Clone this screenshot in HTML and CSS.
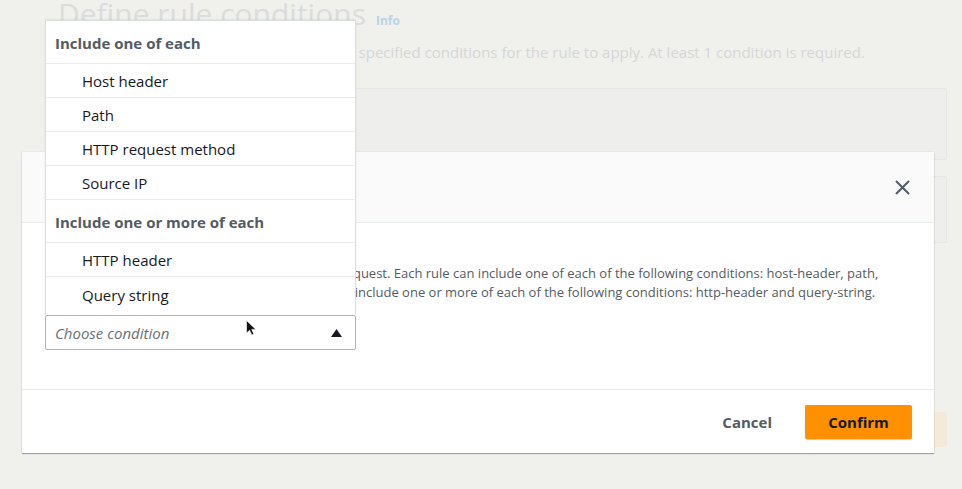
FILE: index.html
```html
<!DOCTYPE html>
<html lang="en">
<head>
<meta charset="utf-8">
<title>Define rule conditions</title>
<link rel="stylesheet" href="styles.css">
</head>
<body>
<div class="page">
  <div class="page-head">
    <h1 class="page-title">Define rule conditions</h1>
    <a class="info-link">Info</a>
  </div>
  <p class="page-desc">Add one or more conditions. Evaluates the specified conditions for the rule to apply. At least 1 condition is required.</p>
  <div class="bg-panel bg-panel-1"></div>
  <div class="bg-panel bg-panel-2"></div>
  <div class="bg-actions"><span class="bg-button"></span></div>
</div>

<div class="modal">
  <div class="modal-header">
    <h2 class="modal-title">Add condition</h2>
    <button class="close-btn" aria-label="Close">
      <svg width="15" height="15" viewBox="0 0 15 15"><path d="M1 1 L14 14 M14 1 L1 14" stroke="#545b64" stroke-width="2" fill="none"/></svg>
    </button>
  </div>
  <div class="modal-body">
    <p class="modal-text">Rules are evaluated against each incoming HTTP request. Each rule can include one of each of the following conditions: host-header, path,<br>http-request-method and source-ip. Rules can also include one or more of each of the following conditions: http-header and query-string.</p>
    <div class="select-wrap">
      <ul class="dropdown">
        <li class="group">Include one of each</li>
        <li class="option">Host header</li>
        <li class="option">Path</li>
        <li class="option">HTTP request method</li>
        <li class="option">Source IP</li>
        <li class="group">Include one or more of each</li>
        <li class="option">HTTP header</li>
        <li class="option last">Query string</li>
      </ul>
      <div class="select">
        <span class="placeholder">Choose condition</span>
        <svg class="caret" width="11" height="8" viewBox="0 0 11 8"><path d="M5.5 0 L11 8 L0 8 Z" fill="#16191f"/></svg>
      </div>
      <svg class="cursor" width="11" height="16" viewBox="0 0 11 16"><path d="M0.5 0.5 L0.5 13 L3.6 10.2 L5.8 15 L7.8 14.1 L5.7 9.4 L9.8 9.4 Z" fill="#111" stroke="#fff" stroke-width="0.6"/></svg>
    </div>
  </div>
  <div class="modal-footer">
    <button class="btn-cancel">Cancel</button>
    <button class="btn-confirm">Confirm</button>
  </div>
</div>
</body>
</html>
```

FILE: styles.css
```css
* { box-sizing: border-box; }

html, body {
  margin: 0;
  padding: 0;
}

body {
  width: 962px;
  height: 489px;
  overflow: hidden;
  background: #f0f0ed;
  font-family: "Open Sans", "Liberation Sans", sans-serif;
  position: relative;
}

.page {
  padding: 0 15px 0 58px;
}

.page-head {
  display: flex;
  align-items: baseline;
  gap: 10px;
  margin-top: -4px;
}

.page-title {
  margin: 0;
  font-size: 30px;
  line-height: 36px;
  font-weight: 400;
  color: #dcdcdb;
}

.info-link {
  font-size: 12px;
  font-weight: 700;
  color: #bcd3e4;
}

.page-desc {
  margin: 10px 0 0;
  font-size: 15px;
  line-height: 20px;
  color: #d5d7d7;
}

.bg-panel {
  background: #eeeeed;
  border: 1px solid #e6e6e4;
  border-radius: 2px;
}

.bg-panel-1 {
  margin-top: 26px;
  height: 72px;
}

.bg-panel-2 {
  margin-top: 16px;
  height: 67px;
}

.bg-actions {
  display: flex;
  justify-content: flex-end;
  margin-top: 169px;
}

.bg-button {
  width: 110px;
  height: 35px;
  background: #f3eadb;
  border-radius: 2px;
}

/* Modal */
.modal {
  position: absolute;
  left: 22px;
  top: 152px;
  width: 912px;
  height: 301px;
  background: #fff;
  display: flex;
  flex-direction: column;
  box-shadow: 0 1px 1px rgba(0, 0, 0, 0.3), 0 0 1px rgba(0, 0, 0, 0.15);
}

.modal-header {
  height: 71px;
  background: #fafafa;
  border-bottom: 1px solid #eaeded;
  display: flex;
  align-items: center;
  justify-content: space-between;
  padding: 0 24px 0 23px;
}

.modal-title {
  margin: 0;
  font-size: 18px;
  font-weight: 700;
  color: #16191f;
}

.close-btn {
  border: 0;
  background: none;
  padding: 0;
  width: 15px;
  height: 15px;
  display: flex;
}

.modal-body {
  height: 167px;
  padding: 41px 23px 0;
  border-bottom: 1px solid #eaeded;
}

.modal-text {
  margin: 0;
  font-size: 13px;
  line-height: 19px;
  color: #545b64;
  white-space: nowrap;
}

.select-wrap {
  position: relative;
  width: 311px;
  margin-top: 13px;
}

.select {
  height: 35px;
  border: 1px solid #aab7b8;
  border-radius: 2px;
  background: #fff;
  display: flex;
  align-items: center;
  justify-content: space-between;
  padding: 0 13px 0 9px;
}

.placeholder {
  font-size: 15px;
  font-style: italic;
  color: #687078;
}

.cursor {
  position: absolute;
  left: 201px;
  top: 5px;
}

.dropdown {
  position: absolute;
  left: 0;
  bottom: 100%;
  width: 311px;
  margin: 0;
  padding: 0 0 4px;
  list-style: none;
  background: #fff;
  border: 1px solid #d9dede;
  border-bottom: 0;
  box-shadow: 0 -1px 2px rgba(0, 0, 0, 0.06);
}

.dropdown li {
  display: flex;
  align-items: center;
  border-bottom: 1px solid #eaeded;
  font-size: 15px;
}

.dropdown .group {
  height: 43px;
  padding: 2px 9px 0;
  font-weight: 700;
  color: #545b64;
}

.dropdown .option {
  height: 34px;
  padding: 1px 36px 0;
  color: #16191f;
}

.dropdown .option.last {
  border-bottom: 0;
}

.modal-footer {
  flex: 1;
  display: flex;
  align-items: center;
  justify-content: flex-end;
  padding: 0 22px;
}

.btn-cancel {
  border: 0;
  background: none;
  font-family: inherit;
  font-size: 15px;
  font-weight: 700;
  color: #545b64;
  padding: 0 20px;
  margin-right: 13px;
  height: 34px;
}

.btn-confirm {
  width: 107px;
  height: 34px;
  border: 0;
  border-radius: 2px;
  background: #ff9000;
  font-family: inherit;
  font-size: 15px;
  font-weight: 700;
  color: #16191f;
  box-shadow: 0 1px 1px rgba(0, 0, 0, 0.2);
}
```
